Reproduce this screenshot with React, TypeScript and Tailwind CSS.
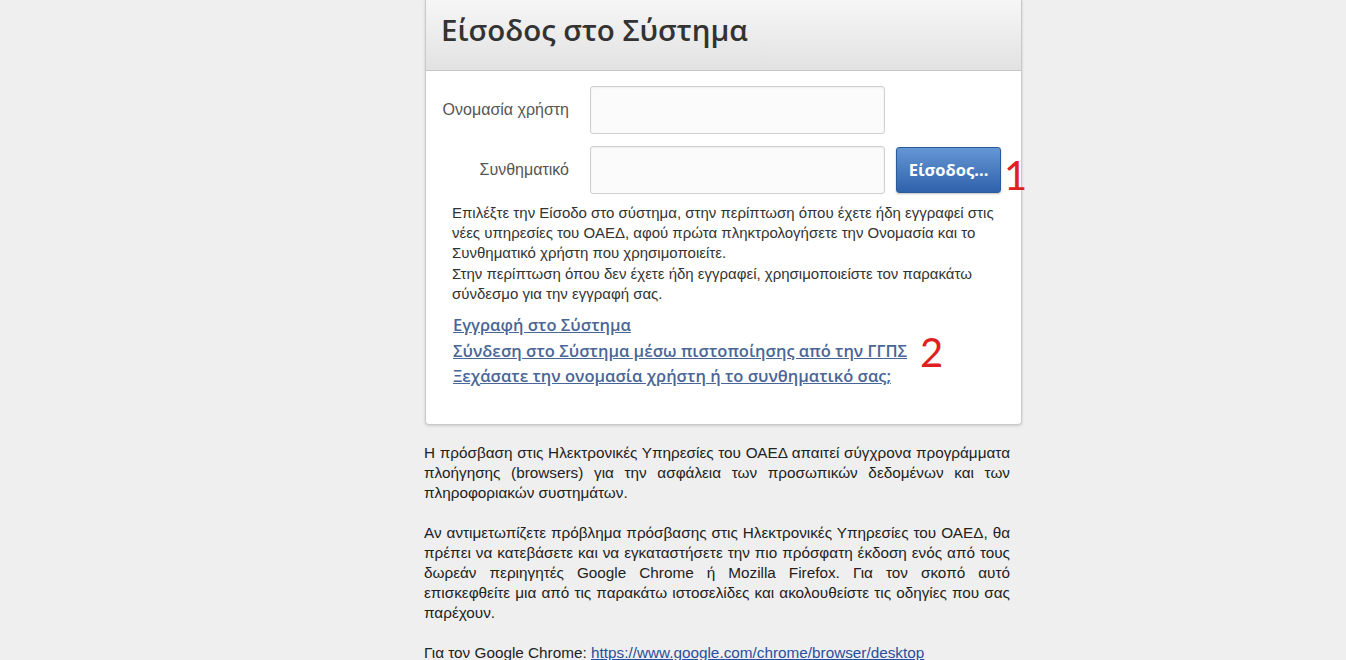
import React from 'react';

const sans = { fontFamily: '"Liberation Sans", Arial, sans-serif' };

export default function App() {
  return (
    <div
      className="min-h-[660px] w-full bg-[#efefef] text-[#333]"
      style={sans}
    >
      <div className="ml-[425px] w-[597px]">
        {/* Login panel */}
        <div className="bg-white border border-t-0 border-[#c9c9c9] rounded-b-[4px] shadow-[0_1px_3px_rgba(0,0,0,0.15)]">
          <div className="h-[71px] border-b border-[#c6c6c6] bg-gradient-to-b from-[#f6f6f6] to-[#e2e2e2] pl-[15px] pt-[9px]">
            <h1 className="font-['Open_Sans',sans-serif] font-semibold text-[29.5px] text-[#333] leading-[42px]">
              Είσοδος στο Σύστημα
            </h1>
          </div>

          <div className="pt-[15px] pb-[35px]">
            <div className="flex items-center h-[48px]">
              <label className="w-[143px] shrink-0 text-right text-[16px] text-[#555]">Ονομασία χρήστη</label>
              <input className="ml-[21px] w-[295px] shrink-0 h-[48px] rounded-[3px] border border-[#cfcfcf] bg-[#fbfbfb] shadow-[inset_0_1px_2px_rgba(0,0,0,0.06)] outline-none" />
            </div>
            <div className="flex items-center h-[48px] mt-[12px]">
              <label className="w-[143px] shrink-0 text-right text-[16px] text-[#555]">Συνθηματικό</label>
              <input type="password" className="ml-[21px] w-[295px] shrink-0 h-[48px] rounded-[3px] border border-[#cfcfcf] bg-[#fbfbfb] shadow-[inset_0_1px_2px_rgba(0,0,0,0.06)] outline-none" />
              <button className="ml-[11px] w-[105px] shrink-0 h-[46px] rounded-[3px] border border-[#2c5a9a] bg-gradient-to-b from-[#6596d4] to-[#2e62ab] text-white font-['Open_Sans',sans-serif] font-bold text-[16.5px] shadow-[0_1px_2px_rgba(0,0,0,0.25)]">
                Είσοδος...
              </button>
              <span className="ml-[3px] mt-[10px] shrink-0 text-[#e02020] text-[40px] leading-none font-['Lato',sans-serif]">1</span>
            </div>

            <p className="mt-[9px] ml-[26px] w-[545px] text-[15px] leading-[20.2px] text-[#333]">
              Επιλέξτε την Είσοδο στο σύστημα, στην περίπτωση όπου έχετε ήδη εγγραφεί στις νέες υπηρεσίες του ΟΑΕΔ, αφού πρώτα πληκτρολογήσετε την Ονομασία και το Συνθηματικό χρήστη που χρησιμοποιείτε.
              <br />
              Στην περίπτωση όπου δεν έχετε ήδη εγγραφεί, χρησιμοποιείστε τον παρακάτω σύνδεσμο για την εγγραφή σας.
            </p>

            <div className="mt-[8px] ml-[27px] flex flex-col font-['Open_Sans',sans-serif] font-semibold text-[16.5px] leading-[25.5px] text-[#4a6696]">
              <a href="#" className="underline w-fit">Εγγραφή στο Σύστημα</a>
              <div className="flex items-center h-[25.5px]">
                <a href="#" className="underline">Σύνδεση στο Σύστημα μέσω πιστοποίησης από την ΓΓΠΣ</a>
                <span className="ml-[13px] mt-[4px] text-[#e02020] text-[40px] leading-[25px] font-normal font-['Lato',sans-serif]">2</span>
              </div>
              <a href="#" className="underline w-fit">Ξεχάσατε την ονομασία χρήστη ή το συνθηματικό σας;</a>
            </div>
          </div>
        </div>

        {/* Info text */}
        <div className="mt-[18px] -ml-[1px] w-[586px] text-[15.3px] leading-[20px] text-[#222] text-justify">
          <p>
            Η πρόσβαση στις Ηλεκτρονικές Υπηρεσίες του ΟΑΕΔ απαιτεί σύγχρονα προγράμματα πλοήγησης (browsers) για την ασφάλεια των προσωπικών δεδομένων και των πληροφοριακών συστημάτων.
          </p>
          <p className="mt-[20px]">
            Αν αντιμετωπίζετε πρόβλημα πρόσβασης στις Ηλεκτρονικές Υπηρεσίες του ΟΑΕΔ, θα πρέπει να κατεβάσετε και να εγκαταστήσετε την πιο πρόσφατη έκδοση ενός από τους δωρεάν περιηγητές Google Chrome ή Mozilla Firefox. Για τον σκοπό αυτό επισκεφθείτε μια από τις παρακάτω ιστοσελίδες και ακολουθείστε τις οδηγίες που σας παρέχουν.
          </p>
          <p className="mt-[20px]">
            Για τον Google Chrome:{' '}
            <a href="#" className="underline text-[#2a4ea0]">https://www.google.com/chrome/browser/desktop</a>
          </p>
        </div>
      </div>
    </div>
  );
}
